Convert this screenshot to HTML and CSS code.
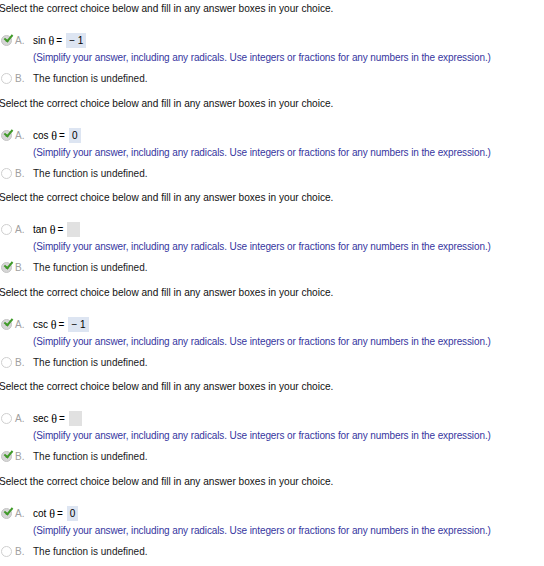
FILE: index.html
```html
<!DOCTYPE html>
<html lang="en">
<head>
    <meta charset="UTF-8">
    <title>Trig values</title>
    <link rel="stylesheet" href="styles.css">
</head>
<body>
    <div class="question">
        <p class="prompt">Select the correct choice below and fill in any answer boxes in your choice.</p>
        <div class="choice">
            <span class="radio checked"></span><span class="letter">A.</span>
            <div class="body">
                <div class="math"><span class="fn">sin</span> <span class="theta">θ</span><span class="eq">=</span><span class="box filled">− 1</span></div>
                <div class="hint">(Simplify your answer, including any radicals. Use integers or fractions for any numbers in the expression.)</div>
            </div>
        </div>
        <div class="choice">
            <span class="radio"></span><span class="letter">B.</span>
            <div class="body">The function is undefined.</div>
        </div>
    </div>

    <div class="question">
        <p class="prompt">Select the correct choice below and fill in any answer boxes in your choice.</p>
        <div class="choice">
            <span class="radio checked"></span><span class="letter">A.</span>
            <div class="body">
                <div class="math"><span class="fn">cos</span> <span class="theta">θ</span><span class="eq">=</span><span class="box filled">0</span></div>
                <div class="hint">(Simplify your answer, including any radicals. Use integers or fractions for any numbers in the expression.)</div>
            </div>
        </div>
        <div class="choice">
            <span class="radio"></span><span class="letter">B.</span>
            <div class="body">The function is undefined.</div>
        </div>
    </div>

    <div class="question">
        <p class="prompt">Select the correct choice below and fill in any answer boxes in your choice.</p>
        <div class="choice">
            <span class="radio"></span><span class="letter">A.</span>
            <div class="body">
                <div class="math"><span class="fn">tan</span> <span class="theta">θ</span><span class="eq">=</span><span class="box empty"></span></div>
                <div class="hint">(Simplify your answer, including any radicals. Use integers or fractions for any numbers in the expression.)</div>
            </div>
        </div>
        <div class="choice">
            <span class="radio checked"></span><span class="letter">B.</span>
            <div class="body">The function is undefined.</div>
        </div>
    </div>

    <div class="question">
        <p class="prompt">Select the correct choice below and fill in any answer boxes in your choice.</p>
        <div class="choice">
            <span class="radio checked"></span><span class="letter">A.</span>
            <div class="body">
                <div class="math"><span class="fn">csc</span> <span class="theta">θ</span><span class="eq">=</span><span class="box filled">− 1</span></div>
                <div class="hint">(Simplify your answer, including any radicals. Use integers or fractions for any numbers in the expression.)</div>
            </div>
        </div>
        <div class="choice">
            <span class="radio"></span><span class="letter">B.</span>
            <div class="body">The function is undefined.</div>
        </div>
    </div>

    <div class="question">
        <p class="prompt">Select the correct choice below and fill in any answer boxes in your choice.</p>
        <div class="choice">
            <span class="radio"></span><span class="letter">A.</span>
            <div class="body">
                <div class="math"><span class="fn">sec</span> <span class="theta">θ</span><span class="eq">=</span><span class="box empty"></span></div>
                <div class="hint">(Simplify your answer, including any radicals. Use integers or fractions for any numbers in the expression.)</div>
            </div>
        </div>
        <div class="choice">
            <span class="radio checked"></span><span class="letter">B.</span>
            <div class="body">The function is undefined.</div>
        </div>
    </div>

    <div class="question">
        <p class="prompt">Select the correct choice below and fill in any answer boxes in your choice.</p>
        <div class="choice">
            <span class="radio checked"></span><span class="letter">A.</span>
            <div class="body">
                <div class="math"><span class="fn">cot</span> <span class="theta">θ</span><span class="eq">=</span><span class="box filled">0</span></div>
                <div class="hint">(Simplify your answer, including any radicals. Use integers or fractions for any numbers in the expression.)</div>
            </div>
        </div>
        <div class="choice">
            <span class="radio"></span><span class="letter">B.</span>
            <div class="body">The function is undefined.</div>
        </div>
    </div>
</body>
</html>
```

FILE: styles.css
```css
* {
    margin: 0;
    padding: 0;
    box-sizing: border-box;
}

body {
    font-family: "Liberation Sans", Arial, sans-serif;
    font-size: 10px;
    color: #222;
    background: #fff;
    padding: 3px 0 0 0;
    margin-left: -1px;
}

.question {
    height: 94.6px;
}

.prompt {
    color: #111;
    font-size: 10.1px;
    line-height: 12px;
    margin-bottom: 19px;
}

.choice {
    display: flex;
    align-items: flex-start;
    padding-left: 2px;
}

.radio {
    position: relative;
    width: 11px;
    height: 11px;
    border: 1px solid #cfcfcf;
    border-radius: 50%;
    background: #fff;
    flex-shrink: 0;
    margin-top: 1px;
}

.radio.checked {
    background: #d6d6d6;
    border-color: #c4c4c4;
}

.radio.checked::before {
    content: "";
    position: absolute;
    left: 3px;
    top: 3px;
    width: 3px;
    height: 3px;
    border-radius: 50%;
    background: #aaa;
}

.radio.checked::after {
    content: "";
    position: absolute;
    left: 4px;
    top: -3px;
    width: 3px;
    height: 7px;
    border: solid #3f9a28;
    border-width: 0 2px 2px 0;
    transform: rotate(40deg);
}

.letter {
    color: #a0a0a0;
    width: 21px;
    padding-left: 3px;
    line-height: 13px;
}

.body {
    line-height: 13px;
    color: #1a1a1a;
}

.choice + .choice {
    margin-top: 8px;
}

.math {
    height: 16px;
    line-height: 16px;
    margin-top: -1px;
    color: #000;
}

.fn {
    vertical-align: top;
}

.theta {
    font-family: "Liberation Serif", serif;
    font-size: 12px;
    vertical-align: top;
}

.eq {
    margin-left: 2px;
    vertical-align: top;
}

.box {
    display: inline-block;
    height: 15px;
    line-height: 15px;
    padding: 0 3px;
    margin-left: 4px;
    vertical-align: top;
}

.box.filled {
    background: #dde5f2;
}

.box.empty {
    width: 13px;
    background: #e1e1e1;
}

.hint {
    color: #3636a0;
    letter-spacing: -0.11px;
    margin-top: 2px;
}
```
